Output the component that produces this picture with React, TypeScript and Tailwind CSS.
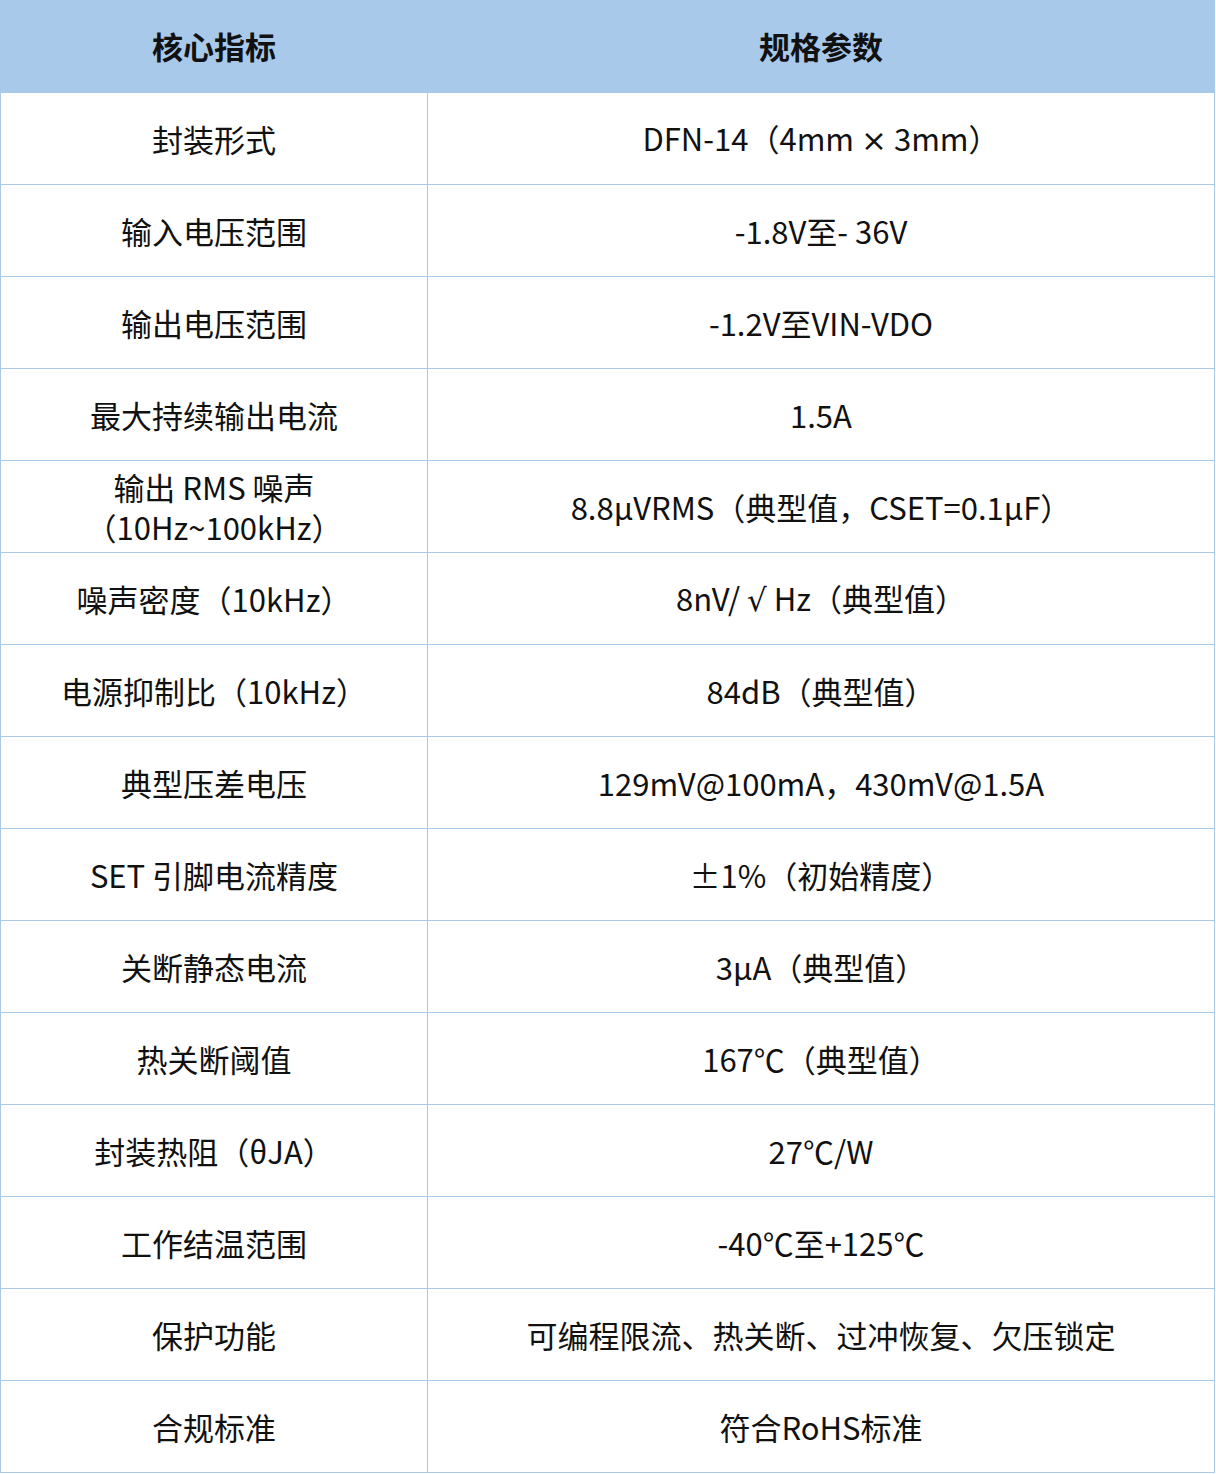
import type { ReactNode } from 'react'

const latin = { fontFamily: '"DejaVu Sans", sans-serif' }

const rows: [ReactNode, ReactNode][] = [
  [
    '封装形式',
    <>
      DFN-14（4mm <span style={latin}>×</span> 3mm）
    </>,
  ],
  ['输入电压范围', '-1.8V至- 36V'],
  ['输出电压范围', '-1.2V至VIN-VDO'],
  ['最大持续输出电流', '1.5A'],
  ['输出 RMS 噪声\n（10Hz~100kHz）', '8.8μVRMS（典型值，CSET=0.1μF）'],
  [
    '噪声密度（10kHz）',
    <>
      8nV/ <span style={latin}>√</span> Hz（典型值）
    </>,
  ],
  ['电源抑制比（10kHz）', '84dB（典型值）'],
  ['典型压差电压', '129mV@100mA，430mV@1.5A'],
  ['SET 引脚电流精度', '±1%（初始精度）'],
  ['关断静态电流', '3μA（典型值）'],
  ['热关断阈值', '167℃（典型值）'],
  ['封装热阻（θJA）', '27℃/W'],
  ['工作结温范围', '-40℃至+125℃'],
  ['保护功能', '可编程限流、热关断、过冲恢复、欠压锁定'],
  ['合规标准', '符合RoHS标准'],
]

export default function App() {
  return (
    <div
      className="w-[1216px] bg-white text-[#111]"
      style={{ fontFamily: '"Noto Sans CJK SC", "Noto Sans", sans-serif' }}
    >
      <table className="w-[1215px] border-collapse table-fixed">
        <colgroup>
          <col className="w-[427px]" />
          <col />
        </colgroup>
        <thead>
          <tr className="h-[92px] bg-[#a8c9ea]">
            <th className="border border-[#a8c9ea] text-[31px] font-bold text-center align-middle">核心指标</th>
            <th className="border border-[#a8c9ea] text-[31px] font-bold text-center align-middle">规格参数</th>
          </tr>
        </thead>
        <tbody>
          {rows.map(([k, v], i) => (
            <tr key={i} className="h-[92px]">
              <td className="border border-[#a8c9ea] text-[31px] leading-[40px] text-center align-middle whitespace-pre-line">
                {k}
              </td>
              <td className="border border-[#a8c9ea] text-[31px] leading-[40px] text-center align-middle">
                {v}
              </td>
            </tr>
          ))}
        </tbody>
      </table>
    </div>
  )
}
